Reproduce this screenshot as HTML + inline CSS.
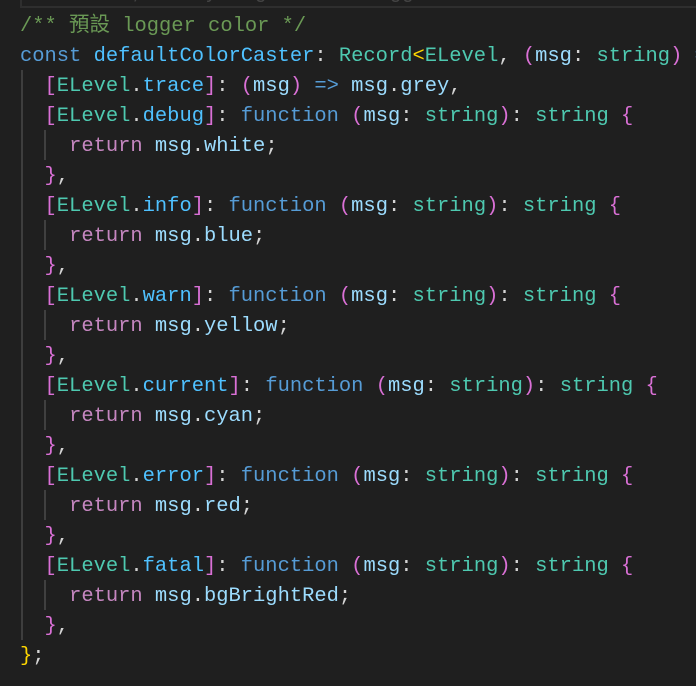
<!DOCTYPE html>
<html><head><meta charset="utf-8"><style>
html,body{margin:0;padding:0;background:#1f1f1f;width:696px;height:686px;overflow:hidden;position:relative}
.code{position:absolute;left:20px;top:12px;font-family:"Liberation Mono","Noto Sans CJK TC",monospace;font-size:20.45px;line-height:30px;color:#d4d4d4;white-space:pre}
.l{height:30px}
.c{color:#6a9955}.k{color:#569cd6}.v{color:#4fc1ff}.t{color:#4ec9b0}.p{color:#da70d6}.y{color:#ffd700}.m{color:#9cdcfe}.e{color:#4fc1ff}.r{color:#c586c0}
.g{position:absolute;width:2px;background:#3e3e3e}
.gi{position:absolute;left:44px;width:2px;background:#404040;height:30px}
.blame{position:absolute;left:20px;top:-14px;width:700px;height:20px;border-left:2px solid #2e2e2e;border-bottom:2px solid #2e2e2e}
.bt{position:absolute;left:95px;top:-18px;font-family:"Liberation Mono",monospace;font-size:20.45px;color:#444;white-space:pre}
</style></head><body>
<div class="blame"></div>
<div class="bt">You, 3 days ago • Add logger</div>
<div class="g" style="left:21px;top:70px;height:570px"></div>
<div class="gi" style="top:130px"></div>
<div class="gi" style="top:220px"></div>
<div class="gi" style="top:310px"></div>
<div class="gi" style="top:400px"></div>
<div class="gi" style="top:490px"></div>
<div class="gi" style="top:580px"></div>
<div class="code"><div class="l"><span class="c">/** 預設 logger color */</span></div><div class="l"><span class="k">const</span> <span class="v">defaultColorCaster</span>: <span class="t">Record</span><span class="y">&lt;</span><span class="t">ELevel</span>, <span class="p">(</span><span class="m">msg</span>: <span class="t">string</span><span class="p">)</span> <span class="k">=&gt;</span></div><div class="l">  <span class="p">[</span><span class="t">ELevel</span>.<span class="e">trace</span><span class="p">]</span>: <span class="p">(</span><span class="m">msg</span><span class="p">)</span> <span class="k">=&gt;</span> <span class="m">msg</span>.<span class="m">grey</span>,</div><div class="l">  <span class="p">[</span><span class="t">ELevel</span>.<span class="e">debug</span><span class="p">]</span>: <span class="k">function</span> <span class="p">(</span><span class="m">msg</span>: <span class="t">string</span><span class="p">)</span>: <span class="t">string</span> <span class="p">{</span></div><div class="l">    <span class="r">return</span> <span class="m">msg</span>.<span class="m">white</span>;</div><div class="l">  <span class="p">}</span>,</div><div class="l">  <span class="p">[</span><span class="t">ELevel</span>.<span class="e">info</span><span class="p">]</span>: <span class="k">function</span> <span class="p">(</span><span class="m">msg</span>: <span class="t">string</span><span class="p">)</span>: <span class="t">string</span> <span class="p">{</span></div><div class="l">    <span class="r">return</span> <span class="m">msg</span>.<span class="m">blue</span>;</div><div class="l">  <span class="p">}</span>,</div><div class="l">  <span class="p">[</span><span class="t">ELevel</span>.<span class="e">warn</span><span class="p">]</span>: <span class="k">function</span> <span class="p">(</span><span class="m">msg</span>: <span class="t">string</span><span class="p">)</span>: <span class="t">string</span> <span class="p">{</span></div><div class="l">    <span class="r">return</span> <span class="m">msg</span>.<span class="m">yellow</span>;</div><div class="l">  <span class="p">}</span>,</div><div class="l">  <span class="p">[</span><span class="t">ELevel</span>.<span class="e">current</span><span class="p">]</span>: <span class="k">function</span> <span class="p">(</span><span class="m">msg</span>: <span class="t">string</span><span class="p">)</span>: <span class="t">string</span> <span class="p">{</span></div><div class="l">    <span class="r">return</span> <span class="m">msg</span>.<span class="m">cyan</span>;</div><div class="l">  <span class="p">}</span>,</div><div class="l">  <span class="p">[</span><span class="t">ELevel</span>.<span class="e">error</span><span class="p">]</span>: <span class="k">function</span> <span class="p">(</span><span class="m">msg</span>: <span class="t">string</span><span class="p">)</span>: <span class="t">string</span> <span class="p">{</span></div><div class="l">    <span class="r">return</span> <span class="m">msg</span>.<span class="m">red</span>;</div><div class="l">  <span class="p">}</span>,</div><div class="l">  <span class="p">[</span><span class="t">ELevel</span>.<span class="e">fatal</span><span class="p">]</span>: <span class="k">function</span> <span class="p">(</span><span class="m">msg</span>: <span class="t">string</span><span class="p">)</span>: <span class="t">string</span> <span class="p">{</span></div><div class="l">    <span class="r">return</span> <span class="m">msg</span>.<span class="m">bgBrightRed</span>;</div><div class="l">  <span class="p">}</span>,</div><div class="l"><span class="y">}</span>;</div></div>
</body></html>
